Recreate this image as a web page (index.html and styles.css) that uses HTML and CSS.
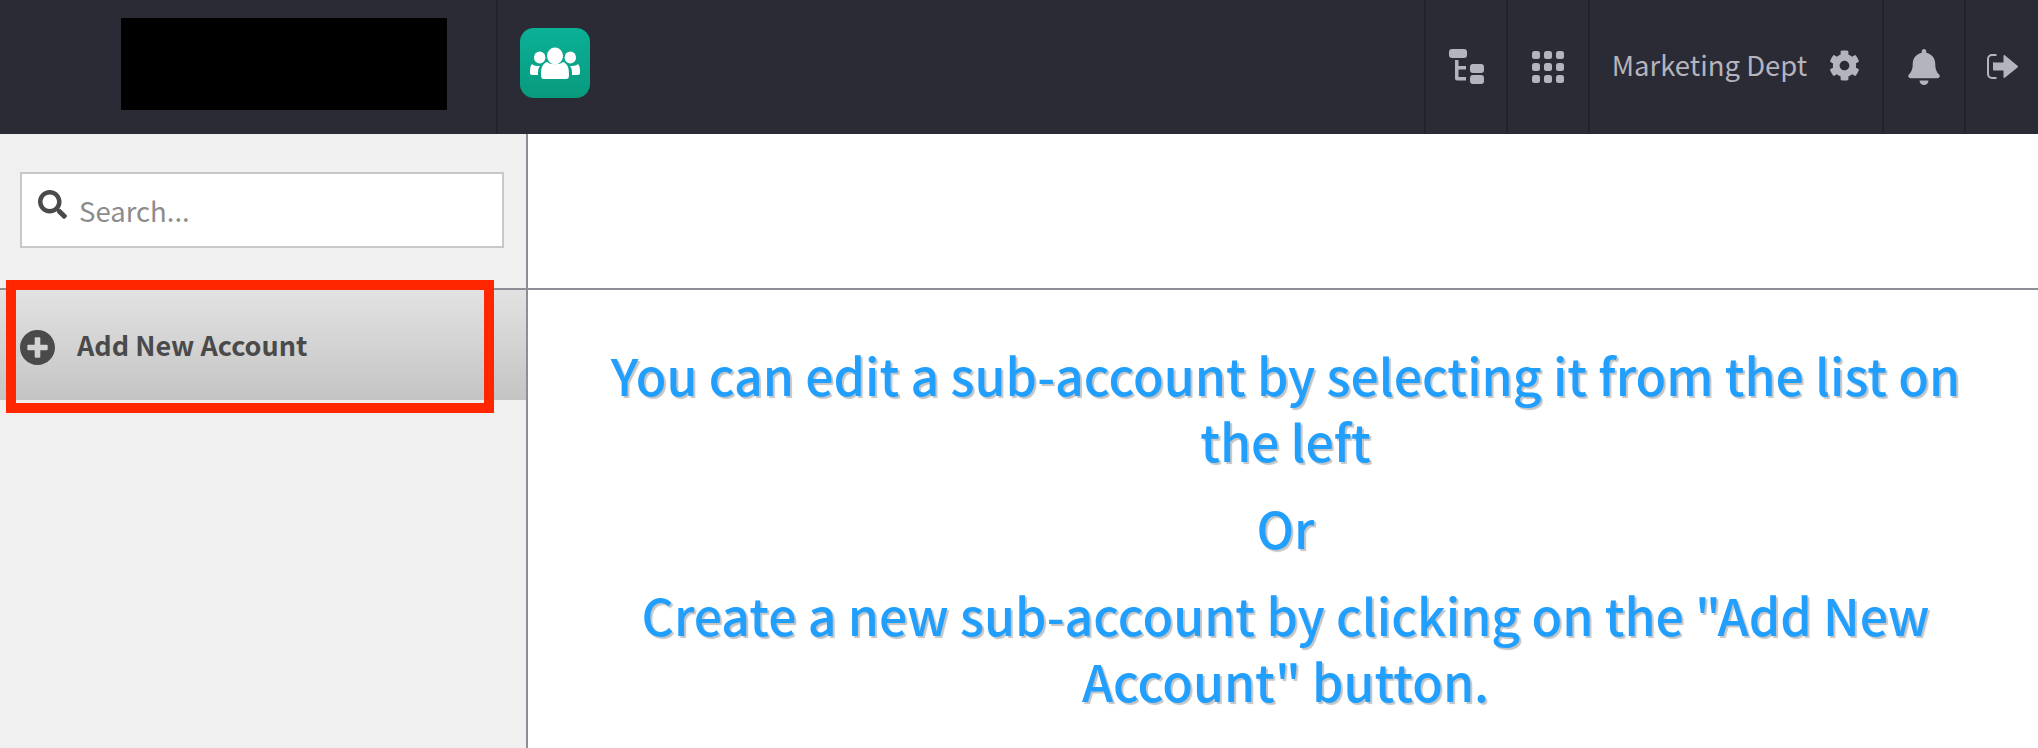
FILE: index.html
```html
<!DOCTYPE html>
<html lang="en">
<head>
    <meta charset="UTF-8">
    <title>Sub-Accounts</title>
    <link rel="stylesheet" href="styles.css">
</head>
<body>
    <div class="header">
        <div class="logo-cell"><div class="logo-block"></div></div>
        <div class="app-badge">
            <svg viewBox="0 0 70 70" width="70" height="70">
                <ellipse cx="35" cy="28" rx="8" ry="8.500"/>
                <path d="M21 47c0-7 1-11 6-13 3 3 13 3 16 0 5 2 6 6 6 13 0 3-1 4-3 4H24c-2 0-3-1-3-4z"/>
                <ellipse cx="19.700" cy="29.500" rx="5.700" ry="6"/>
                <ellipse cx="50.300" cy="29.500" rx="5.700" ry="6"/>
                <path d="M12 36c1 1 3 2 6 2h2c-2 2-2 5-2 9h-6c-1 0-2-1-2-2 0-4 0-7 2-9z"/>
                <path d="M58 36c-1 1-3 2-6 2h-2c2 2 2 5 2 9h6c1 0 2-1 2-2 0-4 0-7-2-9z"/>
            </svg>
        </div>
        <div class="header-right">
            <div class="nav-cell">
                <svg class="nav-icon" viewBox="0 0 35 35" width="35" height="35">
                    <rect x="0" y="0" width="18" height="9" rx="3"/>
                    <path d="M6 11h3.500v6H17v3.500H9.500v7.500H17v3.500H8c-1 0-2-1-2-2z"/>
                    <rect x="21" y="15" width="14" height="9" rx="3"/>
                    <rect x="21" y="26" width="14" height="9" rx="3"/>
                </svg>
            </div>
            <div class="nav-cell">
                <svg class="nav-icon" viewBox="0 0 32 32" width="32" height="32">
                    <rect x="0" y="0" width="8" height="8" rx="2.500"/>
                    <rect x="12" y="0" width="8" height="8" rx="2.500"/>
                    <rect x="24" y="0" width="8" height="8" rx="2.500"/>
                    <rect x="0" y="12" width="8" height="8" rx="2.500"/>
                    <rect x="12" y="12" width="8" height="8" rx="2.500"/>
                    <rect x="24" y="12" width="8" height="8" rx="2.500"/>
                    <rect x="0" y="24" width="8" height="8" rx="2.500"/>
                    <rect x="12" y="24" width="8" height="8" rx="2.500"/>
                    <rect x="24" y="24" width="8" height="8" rx="2.500"/>
                </svg>
            </div>
            <div class="nav-cell account-cell">
                <span class="account-name">Marketing Dept</span>
                <svg class="nav-icon" viewBox="0 0 512 512" width="31" height="31">
                    <path d="M487.4 315.7l-42.6-24.6c4.300-23.200 4.300-47 0-70.200l42.600-24.600c4.900-2.800 7.100-8.600 5.500-14-11.100-35.600-30-67.800-54.700-94.600-3.800-4.100-10-5.100-14.800-2.300L380.800 110c-17.900-15.400-38.500-27.300-60.800-35.100V25.800c0-5.600-3.900-10.500-9.400-11.700-36.700-8.200-74.300-7.800-109.200 0-5.500 1.200-9.400 6.100-9.400 11.700V75c-22.200 7.900-42.800 19.800-60.800 35.100L88.700 85.500c-4.900-2.800-11-1.900-14.800 2.300-24.700 26.700-43.600 58.900-54.700 94.600-1.700 5.400.6 11.200 5.500 14L67.300 221c-4.300 23.200-4.300 47 0 70.200l-42.600 24.600c-4.900 2.800-7.100 8.600-5.500 14 11.100 35.600 30 67.800 54.700 94.600 3.800 4.100 10 5.100 14.800 2.300l42.600-24.600c17.900 15.400 38.500 27.300 60.800 35.100v49.200c0 5.600 3.900 10.500 9.400 11.700 36.700 8.200 74.300 7.800 109.200 0 5.500-1.200 9.400-6.100 9.400-11.700v-49.200c22.200-7.900 42.800-19.800 60.800-35.100l42.600 24.600c4.900 2.800 11 1.900 14.800-2.300 24.700-26.700 43.600-58.900 54.700-94.600 1.500-5.500-.7-11.300-5.600-14.100zM256 336c-44.100 0-80-35.900-80-80s35.900-80 80-80 80 35.900 80 80-35.900 80-80 80z"/>
                </svg>
            </div>
            <div class="nav-cell">
                <svg class="nav-icon" viewBox="0 0 448 512" width="32" height="36">
                    <path d="M224 512c35.320 0 63.970-28.650 63.970-64H160.030c0 35.350 28.650 64 63.970 64zm215.390-149.710c-19.320-20.760-55.470-51.990-55.470-154.290 0-77.700-54.480-139.900-127.940-155.160V32c0-17.670-14.320-32-31.980-32s-31.980 14.330-31.980 32v20.840C118.560 68.100 64.080 130.300 64.080 208c0 102.300-36.150 133.530-55.470 154.290-6 6.450-8.660 14.160-8.610 21.710.11 16.400 12.980 32 32.100 32h383.800c19.120 0 32-15.600 32.100-32 .05-7.550-2.610-15.270-8.610-21.710z"/>
                </svg>
            </div>
            <div class="nav-cell logout-cell">
                <svg class="nav-icon" viewBox="0 0 31 25" width="31" height="25">
                    <path class="logout-bracket" d="M9.500 1H5C2.800 1 1 2.800 1 5v15c0 2.200 1.800 4 4 4h4.500"/>
                    <path d="M7 8.500h9.500V2c0-.8 1-1.200 1.600-.6L30.500 11.700c.6.500.6 1.200 0 1.700L18.100 23.600c-.6.600-1.600.2-1.600-.6v-6.500H7c-.6 0-1-.4-1-1v-6.700c0-.4.400-.8 1-.8z"/>
                </svg>
            </div>
        </div>
    </div>

    <div class="page">
        <div class="sidebar">
            <div class="search-panel">
                <div class="search-box">
                    <svg class="search-icon" viewBox="0 0 512 512" width="29" height="29">
                        <path d="M505 442.700L405.300 343c-4.500-4.500-10.600-7-17-7H372c27.600-35.300 44-79.700 44-128C416 93.100 322.900 0 208 0S0 93.100 0 208s93.100 208 208 208c48.300 0 92.700-16.400 128-44v16.300c0 6.400 2.500 12.500 7 17l99.700 99.700c9.400 9.400 24.600 9.400 33.900 0l28.300-28.300c9.400-9.400 9.400-24.600.1-34zM208 336c-70.700 0-128-57.200-128-128 0-70.700 57.200-128 128-128 70.700 0 128 57.200 128 128 0 70.700-57.200 128-128 128z"/>
                    </svg>
                    <span class="search-placeholder">Search...</span>
                </div>
            </div>
            <div class="add-row">
                <svg class="add-icon" viewBox="8 8 496 496" width="35" height="35">
                    <path d="M256 8C119 8 8 119 8 256s111 248 248 248 248-111 248-248S393 8 256 8zm144 276c0 6.600-5.400 12-12 12h-92v92c0 6.600-5.400 12-12 12h-56c-6.600 0-12-5.400-12-12v-92h-92c-6.600 0-12-5.400-12-12v-56c0-6.600 5.400-12 12-12h92v-92c0-6.600 5.400-12 12-12h56c6.600 0 12 5.400 12 12v92h92c6.600 0 12 5.400 12 12v56z"/>
                </svg>
                <span class="add-label">Add New Account</span>
            </div>
            <div class="highlight-box"></div>
        </div>
        <div class="main">
            <div class="main-top"></div>
            <div class="message">
                <p>You can edit a sub-account by selecting it from the list on the left</p>
                <p>Or</p>
                <p>Create a new sub-account by clicking on the "Add New Account" button.</p>
            </div>
        </div>
    </div>
</body>
</html>
```

FILE: styles.css
```css
* {
    box-sizing: border-box;
}

html, body {
    height: 100%;
}

body {
    margin: 0;
    overflow: hidden;
    display: flex;
    flex-direction: column;
    font-family: "Noto Sans CJK JP", "Noto Sans", sans-serif;
    background: white;
}

.header {
    display: flex;
    align-items: stretch;
    height: 134px;
    flex-shrink: 0;
    background: #2b2b35;
}

.logo-cell {
    width: 498px;
    padding: 18px 0 0 121px;
    border-right: 2px solid #22222c;
}

.logo-block {
    width: 326px;
    height: 92px;
    background: #000;
}

.app-badge {
    width: 70px;
    height: 70px;
    margin: 28px 0 0 22px;
    border-radius: 14px;
    background: linear-gradient(#0bb197, #089a7e);
    fill: white;
}

.app-badge svg {
    display: block;
}

.header-right {
    display: flex;
    margin-left: auto;
}

.nav-cell {
    display: flex;
    align-items: center;
    justify-content: center;
    width: 82px;
    border-left: 2px solid #22222c;
    padding-bottom: 1px;
}

.nav-icon {
    display: block;
    fill: #b4b4be;
}

.account-cell {
    width: 294px;
    gap: 22px;
    padding-bottom: 4px;
}

.account-name {
    font-size: 27.5px;
    color: #b4b4be;
    line-height: 1;
}

.logout-cell {
    width: 74px;
}

.logout-bracket {
    fill: none;
    stroke: #b4b4be;
    stroke-width: 2;
}

.page {
    display: flex;
    flex: 1;
    min-height: 0;
}

.sidebar {
    position: relative;
    width: 528px;
    flex-shrink: 0;
    background: #f0f0f0;
    border-right: 2px solid #8e8e96;
}

.search-panel {
    height: 156px;
    padding: 38px 22px 0 20px;
    border-bottom: 2px solid #8e8e96;
}

.search-box {
    display: flex;
    align-items: center;
    gap: 12px;
    height: 76px;
    padding: 0 0 0 16px;
    background: white;
    border: 2px solid #c8c8c8;
}

.search-icon {
    display: block;
    fill: #4a4a4a;
    margin-top: -12px;
}

.search-placeholder {
    font-size: 27.5px;
    color: #8c8c8c;
    line-height: 1;
    margin-top: 2px;
}

.add-row {
    display: flex;
    align-items: center;
    gap: 22px;
    height: 110px;
    padding: 0 0 0 20px;
    background: linear-gradient(#e2e2e2, #c4c4c4);
}

.add-icon {
    display: block;
    fill: #4a4a4a;
    margin-top: 4px;
}

.add-label {
    font-size: 27px;
    font-weight: bold;
    color: #4a4a4a;
    line-height: 1;
    margin-bottom: 1px;
}

.highlight-box {
    position: absolute;
    left: 6px;
    top: 146px;
    width: 488px;
    height: 133px;
    border: 10px solid #ff2600;
}

.main {
    flex: 1;
    min-width: 0;
}

.main-top {
    height: 156px;
    border-bottom: 2px solid #8e8e96;
}

.message {
    padding: 51px 70px 0 75px;
    text-align: center;
    font-size: 50px;
    font-weight: 500;
    line-height: 66px;
    color: #219fff;
    text-shadow: 2px 2px 1px #c4c4c4;
}

.message p {
    margin: 0 0 21px;
}
```
